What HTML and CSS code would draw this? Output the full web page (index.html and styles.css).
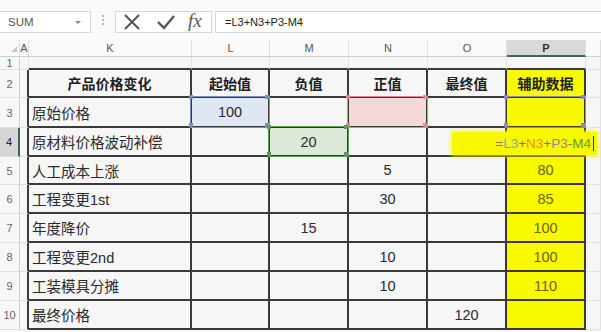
FILE: index.html
```html
<!DOCTYPE html>
<html lang="zh">
<head>
<meta charset="utf-8">
<title>Sheet</title>
<link rel="stylesheet" href="styles.css">
</head>
<body>
<div class="bar">
  <div class="namebox"><span class="nm">SUM</span><span class="dd"></span></div>
  <div class="grip"></div>
  <div class="fxbox">
    <svg class="ic" width="18" height="18" viewBox="0 0 18 18"><path d="M2 2 L16 16 M16 2 L2 16" stroke="#555" stroke-width="2" fill="none"/></svg>
    <svg class="ic" width="20" height="18" viewBox="0 0 20 18"><path d="M2 9 L8 15 L18 3" stroke="#555" stroke-width="2.4" fill="none"/></svg>
    <span class="fx">fx</span>
  </div>
  <div class="input">=L3+N3+P3-M4</div>
</div>
<div class="sheet">
  <div class="ch corner"><span class="tri"></span></div>
  <div class="ch">A</div>
  <div class="ch">K</div>
  <div class="ch">L</div>
  <div class="ch">M</div>
  <div class="ch">N</div>
  <div class="ch">O</div>
  <div class="ch on">P</div>
  <div class="ch"></div>

  <div class="rh">1</div>
  <div class="c"></div>
  <div class="c top"></div><div class="c top"></div><div class="c top"></div><div class="c top"></div><div class="c top"></div><div class="c top"></div>
  <div class="c"></div>

  <div class="rh">2</div>
  <div class="c edge"></div>
  <div class="t b">产品价格变化</div>
  <div class="t b">起始值</div>
  <div class="t b">负值</div>
  <div class="t b">正值</div>
  <div class="t b">最终值</div>
  <div class="t b y">辅助数据</div>
  <div class="c"></div>

  <div class="rh">3</div>
  <div class="c edge"></div>
  <div class="t l">原始价格</div>
  <div class="t sel blue">100</div>
  <div class="t"></div>
  <div class="t sel red"></div>
  <div class="t"></div>
  <div class="t y sel purple"></div>
  <div class="c"></div>

  <div class="rh act">4</div>
  <div class="c edge"></div>
  <div class="t l">原材料价格波动补偿</div>
  <div class="t"></div>
  <div class="t sel green">20</div>
  <div class="t"></div>
  <div class="t"></div>
  <div class="t y"></div>
  <div class="c"></div>

  <div class="rh">5</div>
  <div class="c edge"></div>
  <div class="t l">人工成本上涨</div>
  <div class="t"></div><div class="t"></div>
  <div class="t">5</div>
  <div class="t"></div>
  <div class="t y">80</div>
  <div class="c"></div>

  <div class="rh">6</div>
  <div class="c edge"></div>
  <div class="t l">工程变更1st</div>
  <div class="t"></div><div class="t"></div>
  <div class="t">30</div>
  <div class="t"></div>
  <div class="t y">85</div>
  <div class="c"></div>

  <div class="rh">7</div>
  <div class="c edge"></div>
  <div class="t l">年度降价</div>
  <div class="t"></div>
  <div class="t">15</div>
  <div class="t"></div>
  <div class="t"></div>
  <div class="t y">100</div>
  <div class="c"></div>

  <div class="rh">8</div>
  <div class="c edge"></div>
  <div class="t l">工程变更2nd</div>
  <div class="t"></div><div class="t"></div>
  <div class="t">10</div>
  <div class="t"></div>
  <div class="t y">100</div>
  <div class="c"></div>

  <div class="rh">9</div>
  <div class="c edge"></div>
  <div class="t l">工装模具分摊</div>
  <div class="t"></div><div class="t"></div>
  <div class="t">10</div>
  <div class="t"></div>
  <div class="t y">110</div>
  <div class="c"></div>

  <div class="rh">10</div>
  <div class="c edge"></div>
  <div class="t l">最终价格</div>
  <div class="t"></div><div class="t"></div><div class="t"></div>
  <div class="t">120</div>
  <div class="t y"></div>
  <div class="c"></div>

  <div class="edit"><span class="f0">=</span><span class="f1">L3</span><span class="f0">+</span><span class="f2">N3</span><span class="f0">+</span><span class="f3">P3</span><span class="f0">-</span><span class="f4">M4</span><span class="caret"></span></div>
</div>
</body>
</html>
```

FILE: styles.css
```css
* { box-sizing: border-box; }
html, body { margin: 0; padding: 0; }
body {
  width: 601px;
  height: 332px;
  overflow: hidden;
  background: #f6f6f6;
  font-family: "Liberation Sans", "Noto Sans CJK SC", sans-serif;
  color: #222;
}
.bar {
  height: 40px;
  background: #fafafa;
  display: flex;
  align-items: flex-start;
  padding-top: 11px;
}
.namebox {
  width: 92px;
  height: 22px;
  margin-left: -1px;
  border: 1px solid #d8d8d8;
  background: #fff;
  display: flex;
  align-items: center;
  padding-left: 8px;
  font-size: 11.5px;
  color: #555;
}
.nm { flex: 1; }
.dd {
  width: 0; height: 0;
  border-left: 3px solid transparent;
  border-right: 3px solid transparent;
  border-top: 3px solid #888;
  margin-right: 9px;
}
.grip {
  width: 2px;
  height: 12px;
  margin: 4px 11px 0 11px;
  background: repeating-linear-gradient(to bottom, #b8b8b8 0 2px, transparent 2px 4px);
}
.fxbox {
  width: 97px;
  height: 22px;
  border: 1px solid #d8d8d8;
  background: #fff;
  display: flex;
  align-items: center;
  padding-left: 7px;
  gap: 14px;
}
.ic { display: block; }
.fxbox .ic:nth-child(2) { margin-left: 1px; }
.fx {
  font-family: "Liberation Serif", serif;
  font-style: italic;
  font-size: 19px;
  color: #555;
  margin-left: -2px;
  margin-top: -3px;
}
.input {
  flex: 1;
  height: 22px;
  margin-left: 3px;
  border: 1px solid #d8d8d8;
  border-right: none;
  background: #fff;
  font-size: 11px;
  line-height: 20px;
  padding-left: 9px;
  color: #222;
}
.sheet {
  position: relative;
  display: grid;
  grid-template-columns: 20px 9px 163px 78px 79px 79px 79px 79px 15px;
  grid-template-rows: 17px 13px 28px 30px 29px 28px 29px 29px 29px 29px 29px;
}
.ch {
  background: #fafafa;
  border-bottom: 1px solid #cfcfcf;
  border-right: 1px solid #dedede;
  font-size: 11px;
  color: #555;
  display: flex;
  align-items: center;
  justify-content: center;
}
.ch.on {
  background: #d9d9d9;
  border-bottom: 2px solid #3d6a4e;
  color: #333;
  font-weight: bold;
}
.corner { justify-content: flex-end; align-items: flex-end; padding: 0 2px 4px 0; }
.tri {
  width: 0; height: 0;
  border-left: 6px solid transparent;
  border-bottom: 6px solid #c8c8c8;
}
.rh {
  background: #f7f7f7;
  border-right: 1px solid #cfcfcf;
  border-bottom: 1px solid #e2e2e2;
  font-size: 11px;
  color: #666;
  display: flex;
  align-items: center;
  justify-content: center;
}
.rh.act {
  background: #d6d6d6;
  border-right: 2px solid #3d6a4e;
  color: #222;
}
.c {
  background: #f6f6f6;
  border-right: 1px solid #e2e2e2;
  border-bottom: 1px solid #e2e2e2;
}
.c.top { border-bottom: 2px solid #3a3a3a; }
.c.edge { border-right: 2px solid #3a3a3a; }
.t {
  background: #f6f6f6;
  border-right: 2px solid #3a3a3a;
  border-bottom: 2px solid #3a3a3a;
  display: flex;
  align-items: center;
  justify-content: center;
  font-size: 14.5px;
  color: #2a2a2a;
  white-space: nowrap;
}
.t.l { justify-content: flex-start; padding-left: 3px; }
.t.b { font-weight: bold; font-size: 14px; color: #1e1e1e; }
.t.y { background: #f9f900; color: #6e6210; }
.t.b.y { color: #1e1e1e; }
.sel { position: relative; }
.sel::before {
  content: "";
  position: absolute;
  left: -2px; top: -2px; right: -2px; bottom: -2px;
  border: 1.5px solid var(--bc);
}
.sel::after {
  content: "";
  position: absolute;
  left: -3px; top: -3px;
  width: 4px; height: 4px;
  background: var(--bc);
  box-shadow: var(--w) 0 0 var(--bc), 0 var(--h) 0 var(--bc), var(--w) var(--h) 0 var(--bc);
}
.blue { background: #dfe7f3; --bc: #7890bd; --w: 76px; --h: 28px; }
.red { background: #f4d9da; --bc: #e08a8e; --w: 77px; --h: 28px; }
.green { background: #dde9d8; --bc: #5c9a55; --w: 77px; --h: 27px; }
.purple { --bc: #9286c4; --w: 77px; --h: 28px; }
.edit {
  position: absolute;
  left: 452px;
  top: 92px;
  width: 145px;
  height: 23px;
  background: #f8f800;
  box-shadow: 0 0 4px 1px rgba(248, 248, 0, 0.85);
  display: flex;
  align-items: center;
  justify-content: flex-end;
  padding-right: 3px;
  font-size: 13.5px;
}
.f0 { color: #8a7a18; }
.f1 { color: #8fa3b8; }
.f2 { color: #e89420; }
.f3 { color: #8f86a6; }
.f4 { color: #5f9e3c; }
.caret {
  width: 1px;
  height: 15px;
  background: #333;
  margin-left: 2px;
}
```
